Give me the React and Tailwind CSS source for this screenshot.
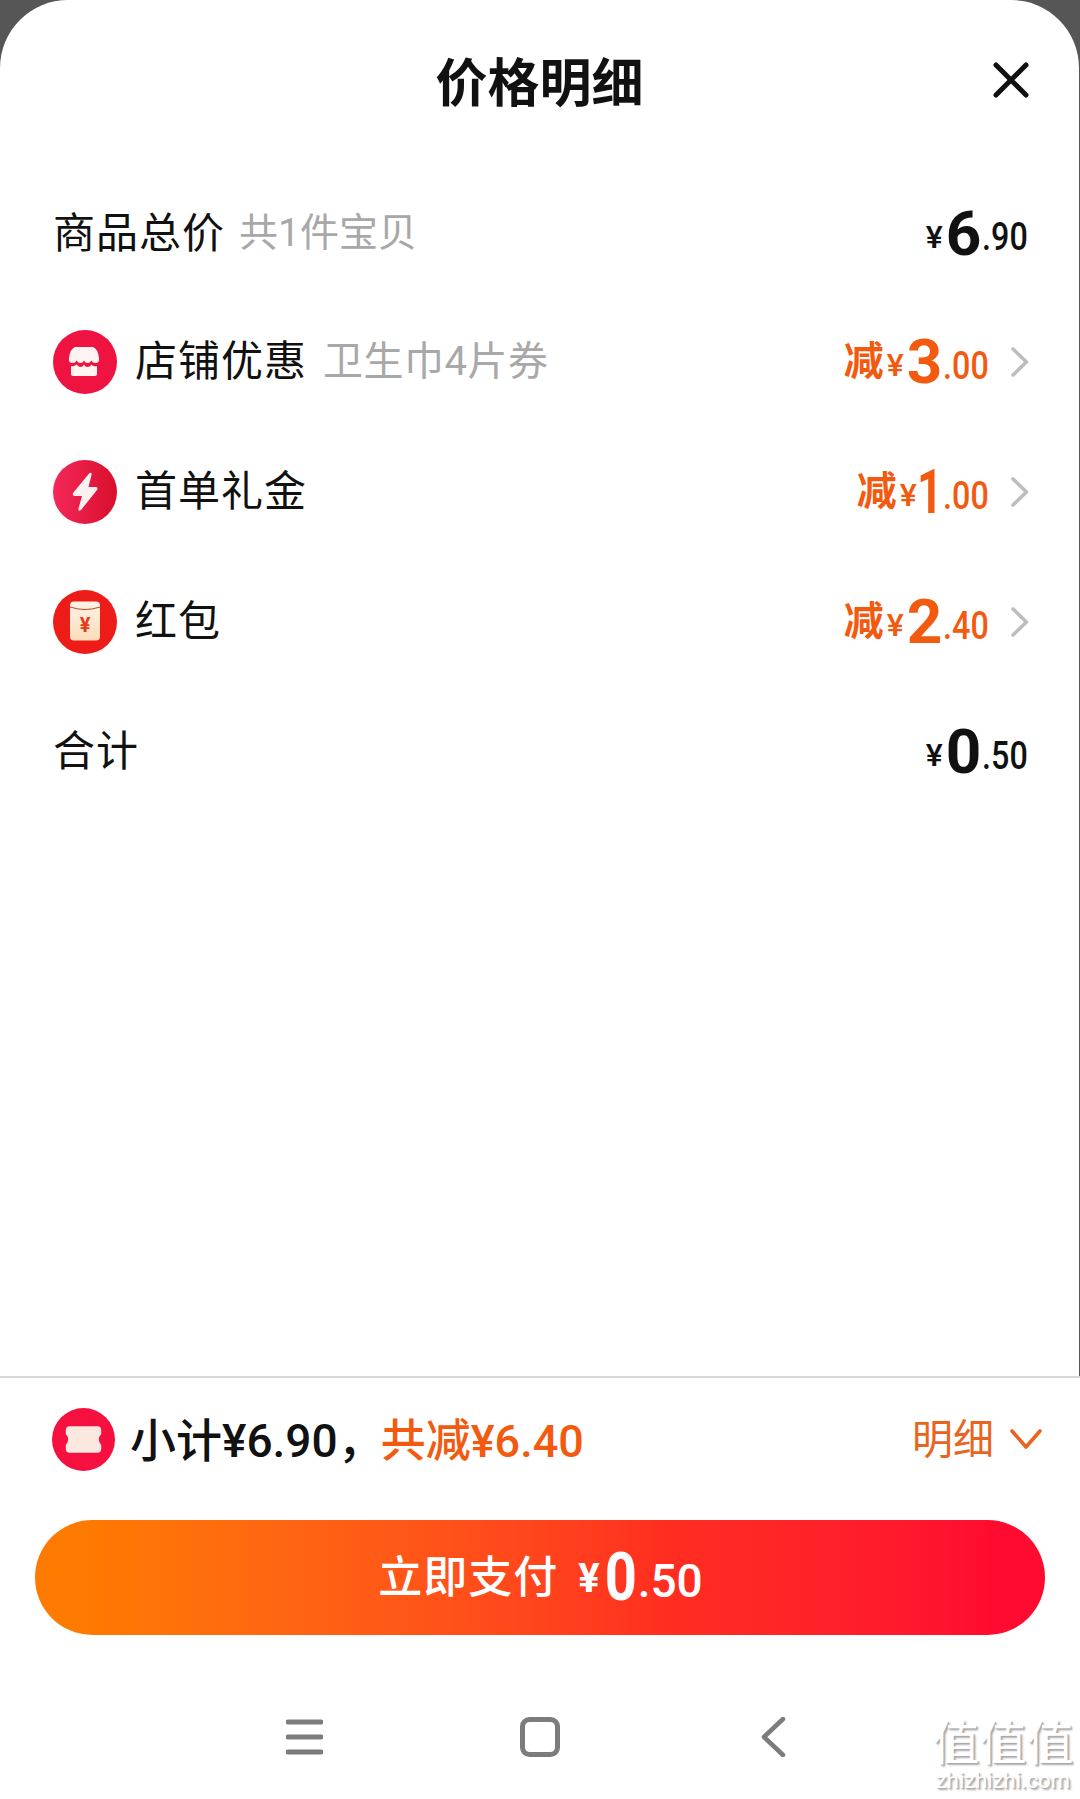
function Price({ prefix, big, small, orange, narrow }) {
  const color = orange ? "text-[#f25a0f]" : "text-[#111111]";
  return (
    <div className={`flex items-center ${color} font-['Roboto','Noto_Sans_CJK_SC',sans-serif] leading-none`}>
      {prefix && <span className="text-[40px] font-bold mr-[3px] mb-[9px] font-['Noto_Sans_CJK_SC',sans-serif]">{prefix}</span>}
      <span className="text-[32px] font-medium mt-[6px]">¥</span>
      <span className={`text-[62px] font-bold inline-block ${narrow ? "-ml-[5px] -mr-[5px] scale-x-[0.72]" : "ml-[3px]"}`}>{big}</span>
      <span className="text-[38px] font-medium mt-[7px] -ml-[7px] inline-block origin-right scale-x-[0.85]">{small}</span>
    </div>
  );
}

function Chevron() {
  return (
    <svg width="18" height="30" viewBox="0 0 18 30" className="ml-[22px] shrink-0">
      <path d="M2 2 L15.500 15 L2 28" fill="none" stroke="#bdbdbd" strokeWidth="3.600" strokeLinecap="round" strokeLinejoin="round" />
    </svg>
  );
}

function StoreIcon() {
  return (
    <svg width="64" height="64" viewBox="0 0 64 64">
      <circle cx="32" cy="32" r="32" fill="#ef1342" />
      <path d="M22 17 H40 Q45 19 46 28 V30 Q46 33 42.500 33 Q39.500 33 38.500 30.500 Q37 33 34.500 33 Q32 33 31 30.500 Q30 33 27.500 33 Q25 33 23.500 30.500 Q22.500 33 19.500 33 Q16 33 16 30 V28 Q17 19 22 17 Z" fill="#fff4f1" />
      <path d="M18 36 Q21 37 23.500 34.500 Q26 37 27.500 37 Q30 37 31 34.500 Q32 37 34.500 37 Q37 37 38.500 34.500 Q40 37 44 36 V44 Q44 46 42 46 H20 Q18 46 18 44 Z" fill="#fff4f1" />
    </svg>
  );
}

function BoltIcon() {
  return (
    <svg width="64" height="64" viewBox="0 0 64 64">
      <defs>
        <linearGradient id="bolt" x1="0" x2="1" y1="0" y2="0">
          <stop offset="0" stopColor="#f5285a" />
          <stop offset="1" stopColor="#d80f2c" />
        </linearGradient>
      </defs>
      <circle cx="32" cy="32" r="32" fill="url(#bolt)" />
      <path d="M36.500 13 Q39 12 38.500 15 L35.500 27 H43 Q45.500 27.500 44 30 L28 50 Q25 52 25.500 48.500 L29 36 H21.500 Q19 35.500 20 33 Z" fill="#fdf0f0" />
    </svg>
  );
}

function PacketIcon() {
  return (
    <svg width="64" height="64" viewBox="0 0 64 64">
      <defs>
        <linearGradient id="cream" x1="0" x2="0" y1="0" y2="1">
          <stop offset="0" stopColor="#fff3e6" />
          <stop offset="1" stopColor="#fbdcb8" />
        </linearGradient>
      </defs>
      <circle cx="32" cy="32" r="32" fill="#ee1c18" />
      <rect x="17" y="11.500" width="30" height="39" rx="4" fill="url(#cream)" />
      <path d="M17 17 Q32 22 47 17" fill="none" stroke="#b9472f" strokeWidth="1" />
      <text x="32" y="42" textAnchor="middle" fontSize="20" fontWeight="700" fill="#e5391f" fontFamily="Roboto, sans-serif">¥</text>
    </svg>
  );
}

function TicketIcon() {
  return (
    <svg width="63" height="63" viewBox="0 0 64 64" className="shrink-0">
      <circle cx="32" cy="32" r="32" fill="#f5103f" />
      <path d="M18 18.500 H46 Q50 18.500 50 22.500 V26.500 Q45 32 50 37.500 V41.500 Q50 45.500 46 45.500 H18 Q14 45.500 14 41.500 V37.500 Q19 32 14 26.500 V22.500 Q14 18.500 18 18.500 Z" fill="#fbe9df" />
    </svg>
  );
}

function Row({ icon, label, note, right, chevron, first }) {
  return (
    <div className={`h-[130px] flex items-center justify-between pl-[53px] pr-[50px] ${first ? "pt-[3px]" : ""}`}>
      <div className="flex items-center">
        {icon && <div className="mr-[18px] w-[64px] h-[64px]">{icon}</div>}
        <span className="text-[42px] leading-none text-[#111111] tracking-[1px]">{label}</span>
        {note && <span className={`${first ? "text-[39px] ml-[14px]" : "text-[40px] ml-[16px] tracking-[0.500px]"} leading-none text-[#a8a8a8]`}>{note}</span>}
      </div>
      <div className={`flex items-center ${chevron ? "" : "mr-[1px]"}`}>
        {right}
        {chevron && <Chevron />}
      </div>
    </div>
  );
}

export default function App() {
  return (
    <div className="w-[1080px] h-[1799px] bg-white flex flex-col overflow-hidden font-['Roboto','Noto_Sans_CJK_SC',sans-serif]">
      <div className="h-[1378px] bg-[#565656] border-b-2 border-[#d9d9d9]">
        <div className="h-full mr-[1px] bg-white rounded-t-[68px]">
          <div className="h-[167px] relative flex items-start justify-center pt-[50px]">
            <h1 className="text-[52px] leading-[60px] font-bold text-[#111111] font-['Noto_Sans_CJK_SC',sans-serif]">价格明细</h1>
            <svg width="36" height="36" viewBox="0 0 36 36" className="absolute right-[50px] top-[62px]">
              <path d="M3 3 L33 33 M33 3 L3 33" stroke="#111111" strokeWidth="5" strokeLinecap="round" />
            </svg>
          </div>
          <Row first label="商品总价" note="共1件宝贝" right={<Price big="6" small=".90" />} />
          <Row icon={<StoreIcon />} label="店铺优惠" note="卫生巾4片券" right={<Price orange prefix="减" big="3" small=".00" />} chevron />
          <Row icon={<BoltIcon />} label="首单礼金" right={<Price orange narrow prefix="减" big="1" small=".00" />} chevron />
          <Row icon={<PacketIcon />} label="红包" right={<Price orange prefix="减" big="2" small=".40" />} chevron />
          <Row label="合计" right={<Price big="0" small=".50" />} />
        </div>
      </div>

      <div className="h-[122px] flex items-center justify-between pl-[52px] pr-[38px]">
        <div className="flex items-center">
          <TicketIcon />
          <div className="ml-[15px] mt-[4px] flex items-center leading-none font-medium font-['Roboto','Noto_Sans_CJK_SC',sans-serif]">
            <span className="text-[46px] text-[#111111]">小计¥6.90，</span>
            <span className="text-[45px] text-[#f25a0f] -ml-[3px]">共减¥6.40</span>
          </div>
        </div>
        <div className="flex items-center">
          <span className="text-[41px] leading-none text-[#e8651f] mt-[2px]">明细</span>
          <svg width="32" height="22" viewBox="0 0 32 22" className="ml-[16px]">
            <path d="M2 3 L16 19 L30 3" fill="none" stroke="#e8651f" strokeWidth="3.600" strokeLinecap="round" strokeLinejoin="round" />
          </svg>
        </div>
      </div>

      <div className="px-[35px] mt-[20px]">
        <div className="h-[115px] pl-[4px] rounded-full bg-gradient-to-r from-[#ff7a00] from-[5%] via-[#ff2e20] via-[62%] to-[#ff0a30] to-[95%] flex items-center justify-center text-white">
          <span className="text-[44px] leading-none font-medium tracking-[1px] -ml-[3px]">立即支付</span>
          <span className="ml-[20px] text-[40px] leading-none font-bold mt-[2px]">¥</span>
          <span className="text-[66px] leading-none font-bold ml-[2px] inline-block scale-x-[0.85]">0</span>
          <span className="text-[46px] leading-none font-medium mt-[6px] -ml-[2px]">.50</span>
        </div>
      </div>

      <div className="flex-1 relative flex items-start pt-[84px] pl-[286px]">
        <svg width="37" height="36" viewBox="0 0 37 36" className="shrink-0">
          <path d="M2 3 H35 M2 18 H35 M2 33 H35" stroke="#7c7c7c" strokeWidth="5" strokeLinecap="round" />
        </svg>
        <svg width="40" height="40" viewBox="0 0 40 40" className="shrink-0 ml-[197px] -mt-[2px]">
          <rect x="2.500" y="2.500" width="35" height="35" rx="7" fill="none" stroke="#7c7c7c" strokeWidth="5" />
        </svg>
        <svg width="26" height="40" viewBox="0 0 26 40" className="shrink-0 ml-[200px] -mt-[2px]">
          <path d="M23 2 L4 20 L23 38" fill="none" stroke="#7c7c7c" strokeWidth="4.500" strokeLinecap="round" strokeLinejoin="round" />
        </svg>
        <div className="absolute right-[5px] top-[80px] w-[144px] flex flex-col items-center text-white font-['Noto_Sans_CJK_SC',sans-serif] [text-shadow:2px_2px_2px_#a8a8a8,1px_1px_0_#c0c0c0]">
          <span className="text-[47px] leading-[50px]">值值值</span>
          <span className="text-[22px] leading-[22px] mt-[5px] font-['Roboto',sans-serif]">zhizhizhi.com</span>
        </div>
      </div>
    </div>
  );
}
